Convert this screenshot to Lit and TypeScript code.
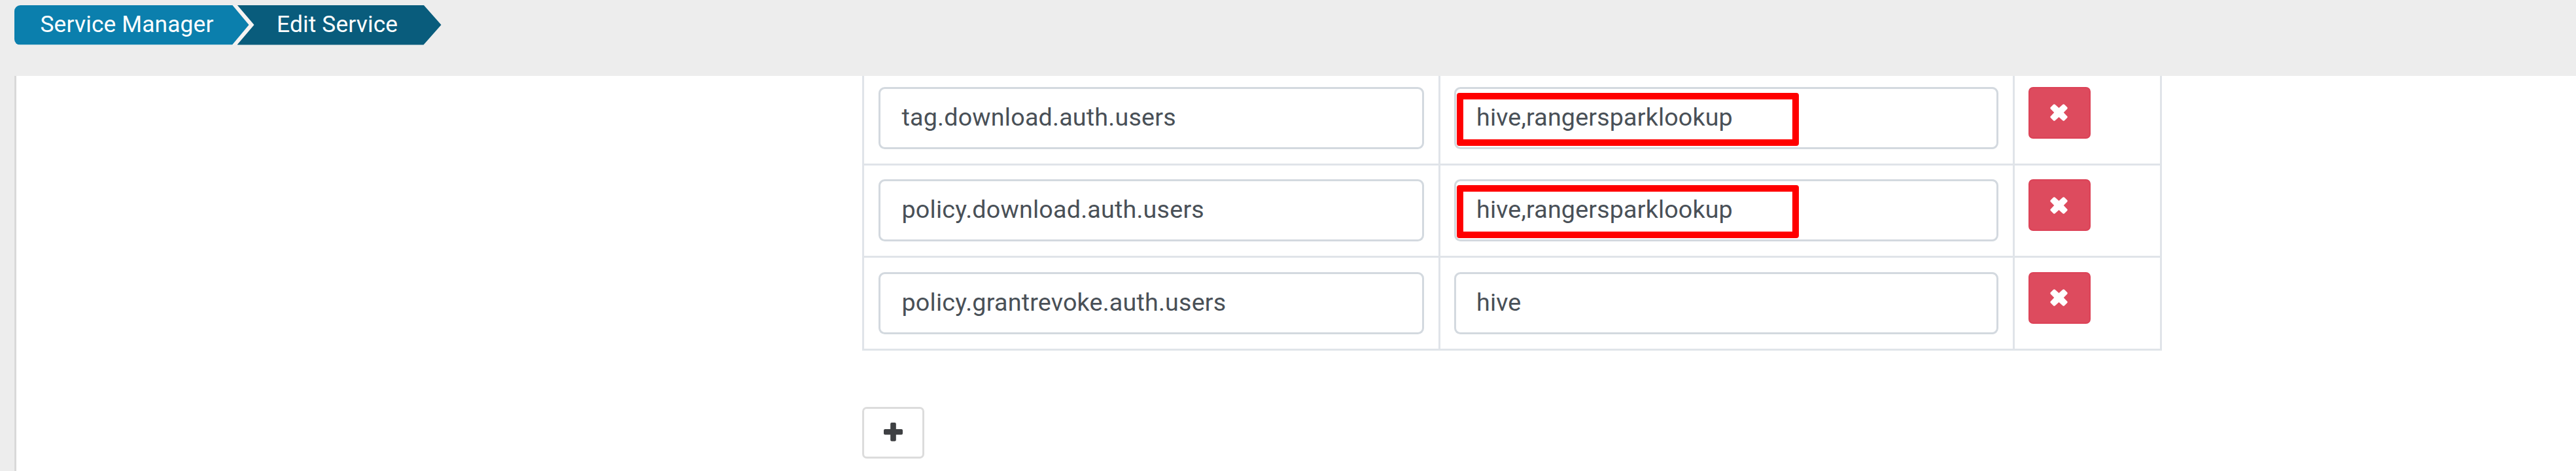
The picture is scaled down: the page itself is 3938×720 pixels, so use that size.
import { LitElement, html, css } from "lit";
import { customElement, property } from "lit/decorators.js";

interface ConfigRow {
  name: string;
  value: string;
  marked: boolean;
}

const ROWS: ConfigRow[] = [
  { name: "tag.download.auth.users", value: "hive,rangersparklookup", marked: true },
  { name: "policy.download.auth.users", value: "hive,rangersparklookup", marked: true },
  { name: "policy.grantrevoke.auth.users", value: "hive", marked: false },
];

@customElement("crumb-trail")
class CrumbTrail extends LitElement {
  static styles = css`
    :host { display: block; padding: 7.5px 0 0 21.5px; }
    .trail { display: flex; height: 61px; }
    .crumb {
      box-sizing: border-box; height: 61px; color: #fff; white-space: nowrap;
      font-size: 35.3px; line-height: 59px; letter-spacing: 0.15px;
    }
    .first {
      width: 367px; background: #f6f3f2; margin-right: -26px; border-radius: 9px 0 0 9px;
      clip-path: polygon(0 0, 341px 0, 367px 50%, 341px 100%, 0 100%);
    }
    .fill {
      box-sizing: border-box; width: 359px; height: 61px; padding-left: 40px;
      background: #0b7fad; border-radius: 9px 0 0 9px;
      clip-path: polygon(0 0, 333.5px 0, 359px 50%, 333.5px 100%, 0 100%);
    }
    .last {
      width: 312px; padding-left: 60.5px; background: #095c7c;
      clip-path: polygon(0 0, 285px 0, 100% 50%, 285px 100%, 0 100%, 26px 50%);
    }
  `;
  render() {
    return html`<nav class="trail">
      <div class="crumb first"><div class="fill">Service Manager</div></div>
      <div class="crumb last">Edit Service</div>
    </nav>`;
  }
}

@customElement("config-table")
class ConfigTable extends LitElement {
  @property({ attribute: false }) rows: ConfigRow[] = [];
  static styles = css`
    :host { display: block; }
    .table {
      box-sizing: border-box; width: 1987px;
      border: solid #e0e4e9; border-width: 0 3px 3px;
    }
    .row {
      display: grid; grid-template-columns: 877.5px 878px 1fr;
      height: 141.3px; box-sizing: border-box; border-top: 3px solid #e0e4e9;
    }
    .row:first-child { height: 133.7px; border-top: 0; }
    .cell { box-sizing: border-box; padding: 21.3px 21.5px 0; border-left: 3px solid #e0e4e9; }
    .cell:first-child { border-left: 0; }
    .row:first-child .cell { padding-top: 16.7px; }
    .field {
      position: relative; box-sizing: border-box; height: 95px; padding-left: 33px;
      border: 3px solid #d3d9df; border-radius: 9.5px; color: #495057;
      font-size: 37.68px; letter-spacing: 0.2px; line-height: 87px; white-space: nowrap;
    }
    .value { padding-left: 31px; letter-spacing: 0.15px; }
    .mark {
      position: absolute; left: 1px; top: 6px; width: 523px; height: 81px;
      box-sizing: border-box; border: 10px solid #f00; border-radius: 4px;
    }
    .remove {
      display: flex; align-items: center; justify-content: center; box-sizing: border-box;
      width: 95px; height: 79px; padding: 0 2px 0 0; color: #fff;
      background: #dd4b5e; border: 2px solid #dc4257; border-radius: 7px;
    }
    .icon { display: block; width: 27px; height: 26px; }
  `;
  render() {
    return html`<div class="table">${this.rows.map((r) => html`
      <div class="row">
        <div class="cell"><div class="field">${r.name}</div></div>
        <div class="cell"><div class="field value">${r.value}${r.marked ? html`<i class="mark"></i>` : ""}</div></div>
        <div class="cell"><button class="remove" aria-label="Remove">
          <svg class="icon" viewBox="0 0 26.5 25.5">
            <path d="M5 .7Q6.2-.3 7.5.8L13.25 6 19 .8q1.3-1.1 2.5 0l4.2 4.2q1 1.1 0 2.3l-5.3 5.5 5.3 5.5q1 1.2 0 2.3l-4.2 4.1q-1.2 1.1-2.5 0L13.25 19.5 7.5 24.7q-1.3 1.1-2.5 0L.8 20.6q-1-1.1 0-2.3l5.3-5.5L.8 7.3Q-.2 6.1.8 5z" fill="currentColor"/>
          </svg></button></div>
      </div>`)}</div>`;
  }
}

@customElement("app-root")
class AppRoot extends LitElement {
  static styles = css`
    :host {
      display: flex; flex-direction: column; box-sizing: border-box; height: 720px;
      overflow: hidden; background: #ededed; font-family: Roboto, sans-serif;
    }
    .head { flex: none; height: 116.3px; }
    .panel {
      flex: 1; margin-left: 22px; padding-left: 1293px; background: #fff;
      border-left: 3px solid #d9d9d9;
    }
    .add {
      display: flex; align-items: center; justify-content: center; box-sizing: border-box;
      width: 95px; height: 79px; margin-top: 86.7px; padding: 0; color: #3e4043;
      background: #fff; border: 3px solid #dcdcdc; border-radius: 7px;
    }
    .plus { display: block; width: 29px; height: 28.5px; margin-top: -3px; }
  `;
  render() {
    return html`
      <header class="head"><crumb-trail></crumb-trail></header>
      <main class="panel">
        <config-table .rows=${ROWS}></config-table>
        <button class="add" aria-label="Add"><svg class="plus" viewBox="0 0 29 28.5">
          <path d="M12.2 0h4.6a2 2 0 0 1 2 2v8h8.2a2 2 0 0 1 2 2v4.4a2 2 0 0 1-2 2h-8.2v8.1a2 2 0 0 1-2 2h-4.6a2 2 0 0 1-2-2v-8.1H2a2 2 0 0 1-2-2V12a2 2 0 0 1 2-2h8.2V2a2 2 0 0 1 2-2z" fill="currentColor"/>
        </svg></button>
      </main>`;
  }
}
